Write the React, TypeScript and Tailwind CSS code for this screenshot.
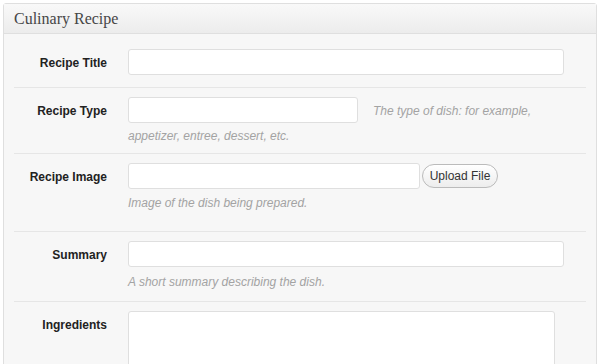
import React from "react";

const inputCls =
  "block h-[26px] rounded-[3px] border border-[#dfdfdf] bg-white px-1 text-[12px] outline-none";
const hintCls = "text-[12px] italic leading-[16px] text-[#a3a3a3]";

function Row({
  label,
  children,
  className = "",
}: {
  label: string;
  children: React.ReactNode;
  className?: string;
}) {
  return (
    <div className={`flex border-b border-[#e6e6e6] pt-[9px] ${className}`}>
      <div className="flex h-[26px] w-[114px] shrink-0 items-center justify-end pr-[21px] pt-[2px] text-[12px] font-bold text-[#222]">
        {label}
      </div>
      <div className="flex-1">{children}</div>
    </div>
  );
}

export default function App() {
  return (
    <div className="h-[364px] overflow-hidden bg-white pl-[3px] pr-[3px] pt-[3px] font-['Liberation_Sans',Arial,sans-serif]">
      <div className="h-[400px] rounded-t-[3px] border border-[#dfdfdf] bg-[#f7f7f7]">
        <div className="flex h-[30px] items-center border-b border-[#dfdfdf] bg-gradient-to-b from-[#f9f9f9] to-[#ececec] px-[10px] font-['Liberation_Serif',Georgia,serif] text-[16px] text-[#464646]">
          Culinary Recipe
        </div>
        <div className="px-[10px]">
          <Row label="Recipe Title" className="pb-[12px] pt-[15px]">
            <input className={`${inputCls} w-[436px]`} />
          </Row>
          <Row label="Recipe Type" className="pb-[9px]">
            <div className="flex h-[26px] items-center">
              <input className={`${inputCls} w-[230px]`} />
              <span className={`${hintCls} ml-[15px] pt-[1px]`}>The type of dish: for example,</span>
            </div>
            <div className={`${hintCls} mt-[5px]`}>appetizer, entree, dessert, etc.</div>
          </Row>
          <Row label="Recipe Image" className="pb-[20px]">
            <div className="flex h-[26px] items-center">
              <input className={`${inputCls} w-[292px]`} />
              <button className="ml-[2px] h-[24px] w-[76px] rounded-full border border-[#bbb] bg-gradient-to-b from-white to-[#ededed] text-[12px] text-[#333]">
                Upload File
              </button>
            </div>
            <div className={`${hintCls} mt-[6px]`}>Image of the dish being prepared.</div>
          </Row>
          <Row label="Summary" className="pb-[11px]">
            <input className={`${inputCls} w-[436px]`} />
            <div className={`${hintCls} mt-[7px]`}>A short summary describing the dish.</div>
          </Row>
          <Row label="Ingredients" className="border-b-0">
            <textarea className="block h-[90px] w-[427px] resize-none rounded-[3px] border border-[#dfdfdf] bg-white outline-none" />
          </Row>
        </div>
      </div>
    </div>
  );
}
